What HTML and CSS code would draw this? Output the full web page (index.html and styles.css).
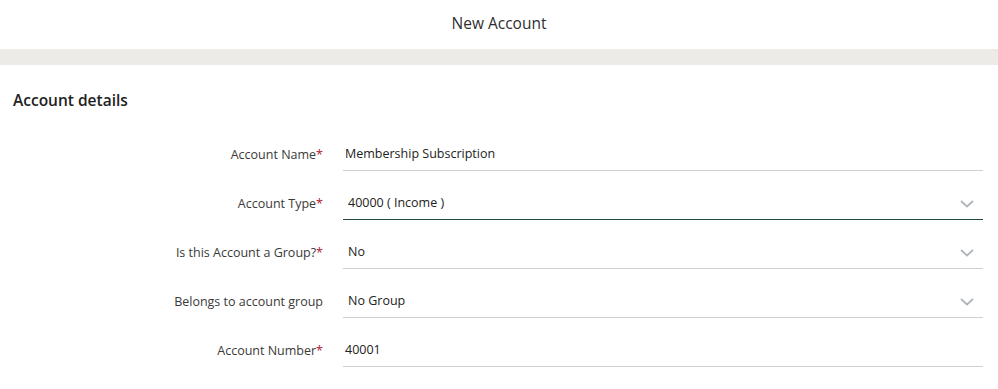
FILE: index.html
```html
<!DOCTYPE html>
<html>
<head>
<meta charset="utf-8">
<link rel="stylesheet" href="styles.css">
</head>
<body>
<header class="topbar">New Account</header>
<div class="band"></div>
<main class="section">
  <h2 class="section-title">Account details</h2>
  <div class="form">
    <div class="row">
      <label class="label">Account Name<span class="req">*</span></label>
      <div class="field"><span class="value">Membership Subscription</span></div>
    </div>
    <div class="row">
      <label class="label">Account Type<span class="req">*</span></label>
      <div class="field select active"><span class="value">40000 ( Income )</span>
        <svg class="chev" width="14" height="8" viewBox="0 0 14 8"><path d="M1 1 L7 6.5 L13 1" fill="none" stroke="#b0b4b8" stroke-width="1.7"/></svg></div>
    </div>
    <div class="row">
      <label class="label">Is this Account a Group?<span class="req">*</span></label>
      <div class="field select"><span class="value">No</span>
        <svg class="chev" width="14" height="8" viewBox="0 0 14 8"><path d="M1 1 L7 6.5 L13 1" fill="none" stroke="#b0b4b8" stroke-width="1.7"/></svg></div>
    </div>
    <div class="row">
      <label class="label">Belongs to account group</label>
      <div class="field select"><span class="value">No Group</span>
        <svg class="chev" width="14" height="8" viewBox="0 0 14 8"><path d="M1 1 L7 6.5 L13 1" fill="none" stroke="#b0b4b8" stroke-width="1.7"/></svg></div>
    </div>
    <div class="row">
      <label class="label">Account Number<span class="req">*</span></label>
      <div class="field"><span class="value">40001</span></div>
    </div>
  </div>
</main>
</body>
</html>
```
FILE: styles.css
```css
* { box-sizing: border-box; }
html, body { margin: 0; padding: 0; background: #fff; }
body { font-family: "Open Sans", "Noto Sans", sans-serif; color: #2b2b2b; }
.topbar {
  height: 49px;
  display: flex;
  align-items: center;
  justify-content: center;
  padding-bottom: 3px;
  font-size: 15.5px;
  color: #2f2f2f;
}
.band { height: 16px; background: #ecebe8; }
.section { padding: 0 15px 0 13px; }
.section-title {
  margin: 23px 0 25px;
  font-size: 15.5px;
  line-height: 24px;
  font-weight: 600;
  color: #222;
}
.form { display: flex; flex-direction: column; gap: 15px; }
.row { display: flex; align-items: stretch; }
.label {
  width: 330px;
  flex: none;
  text-align: right;
  padding-right: 20px;
  font-size: 12.5px;
  color: #3a3a3a;
  display: flex;
  align-items: center;
  justify-content: flex-end;
  height: 34px;
}
.req { color: #b0203a; }
.field {
  flex: 1;
  height: 34px;
  border-bottom: 1px solid #d0d0d0;
  display: flex;
  align-items: center;
  padding-left: 2px;
  font-size: 12.5px;
  color: #222;
}
.field.select { padding-left: 5px; padding-right: 9px; justify-content: space-between; }
.field.active { border-bottom-color: #1f4a3c; }
.chev { display: block; margin-top: 3px; }
```
